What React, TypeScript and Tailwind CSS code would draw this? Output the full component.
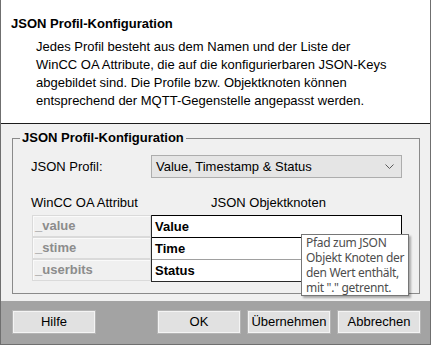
import React from "react";

const rows = [
  { attr: "_value", node: "Value" },
  { attr: "_stime", node: "Time" },
  { attr: "_userbits", node: "Status" },
];

const buttonClass =
  "flex h-[24px] w-[84px] items-center justify-center border border-[#b4b4b4] bg-[#e1e1e1] text-black shadow-[inset_0_0_0_1px_#f4f4f4]";

const App = () => {
  return (
    <div className="h-[346px] w-[432px] bg-white font-['Liberation_Sans',Arial,sans-serif] text-[13px] leading-[16px] text-black">
      <div className="flex h-[345px] w-[431px] flex-col border-x border-b border-[#6f6f6f]">
        {/* header */}
        <div className="h-[124px] border-b border-[#1c1c1c] bg-white pl-[10px] pt-[16px]">
          <h1 className="font-bold">JSON Profil-Konfiguration</h1>
          <p className="mt-[6px] pl-[25px] leading-[18px]">
            Jedes Profil besteht aus dem Namen und der Liste der
            <br />
            WinCC OA Attribute, die auf die konfigurierbaren JSON-Keys
            <br />
            abgebildet sind. Die Profile bzw. Objektknoten können
            <br />
            entsprechend der MQTT-Gegenstelle angepasst werden.
          </p>
        </div>

        {/* body */}
        <div className="relative flex flex-1 flex-col bg-[#f0f0f0] pb-[7px] pl-[11px] pr-[10px] pt-[14px]">
          <div className="flex flex-1 flex-col border border-[#8a8a8a]">
            <div className="-mt-[9px] ml-[7px] w-fit bg-[#f0f0f0] px-[2px] font-bold">
              JSON Profil-Konfiguration
            </div>

            <div className="mt-[9px] flex items-center pl-[18px]">
              <span className="w-[120px]">JSON Profil:</span>
              <div className="flex h-[23px] w-[251px] items-center justify-between border border-[#adadad] bg-[#e5e5e5] pl-[4px] pr-[7px]">
                <span>Value, Timestamp &amp; Status</span>
                <svg width="9" height="6" viewBox="0 0 9 6" fill="none">
                  <polyline points="0.5,0.5 4.5,4.5 8.5,0.5" stroke="#5a5a5a" strokeWidth="1" />
                </svg>
              </div>
            </div>

            <div className="mt-[17px] flex pl-[18px]">
              <span className="w-[180px]">WinCC OA Attribut</span>
              <span>JSON Objektknoten</span>
            </div>

            <div className="ml-[19px] mt-[4px] flex w-[370px]">
              <div className="flex w-[119px] flex-col">
                {rows.map((r) => (
                  <div
                    key={r.attr}
                    className="flex h-[22px] items-center border border-[#dadada] bg-[#f0f0f0] pl-[2px] font-bold text-[#8c8c8c] shadow-[inset_1px_1px_0_#fafafa]"
                  >
                    {r.attr}
                  </div>
                ))}
              </div>
              <div className="flex w-[251px] flex-col border-b border-l border-[#2a2a2a] bg-white">
                {rows.map((r, i) => (
                  <div
                    key={r.node}
                    className={
                      i === 0
                        ? "flex h-[23px] items-center border border-l-0 border-black pl-[3px] font-bold"
                        : i === 1
                          ? "flex h-[22px] items-center border-b border-r border-[#a0a0a0] pl-[3px] font-bold"
                          : "flex h-[21px] items-center border-r border-[#a0a0a0] pl-[3px] font-bold"
                    }
                  >
                    {r.node}
                  </div>
                ))}
              </div>
            </div>
          </div>

          {/* tooltip */}
          <div className="absolute left-[300px] top-[110px] w-[108px] whitespace-nowrap border border-[#767676] bg-white pl-[4px] font-['Noto_Sans',sans-serif] text-[12px] leading-[15px] tracking-[-0.3px] text-[#4d4d4d] shadow-[2px_2px_2px_rgba(0,0,0,0.3)]">
            Pfad zum JSON
            <br />
            Objekt Knoten der
            <br />
            den Wert enthält,
            <br />
            mit "." getrennt.
          </div>
        </div>

        {/* footer */}
        <div className="flex h-[43px] items-start bg-[#a3a3a3] pl-[11px] pr-[9px] pt-[9px]">
          <button className={buttonClass}>Hilfe</button>
          <div className="ml-auto flex gap-[6px]">
            <button className={buttonClass}>OK</button>
            <button className={buttonClass}>Übernehmen</button>
            <button className={buttonClass}>Abbrechen</button>
          </div>
        </div>
      </div>
    </div>
  );
};

export default App;
